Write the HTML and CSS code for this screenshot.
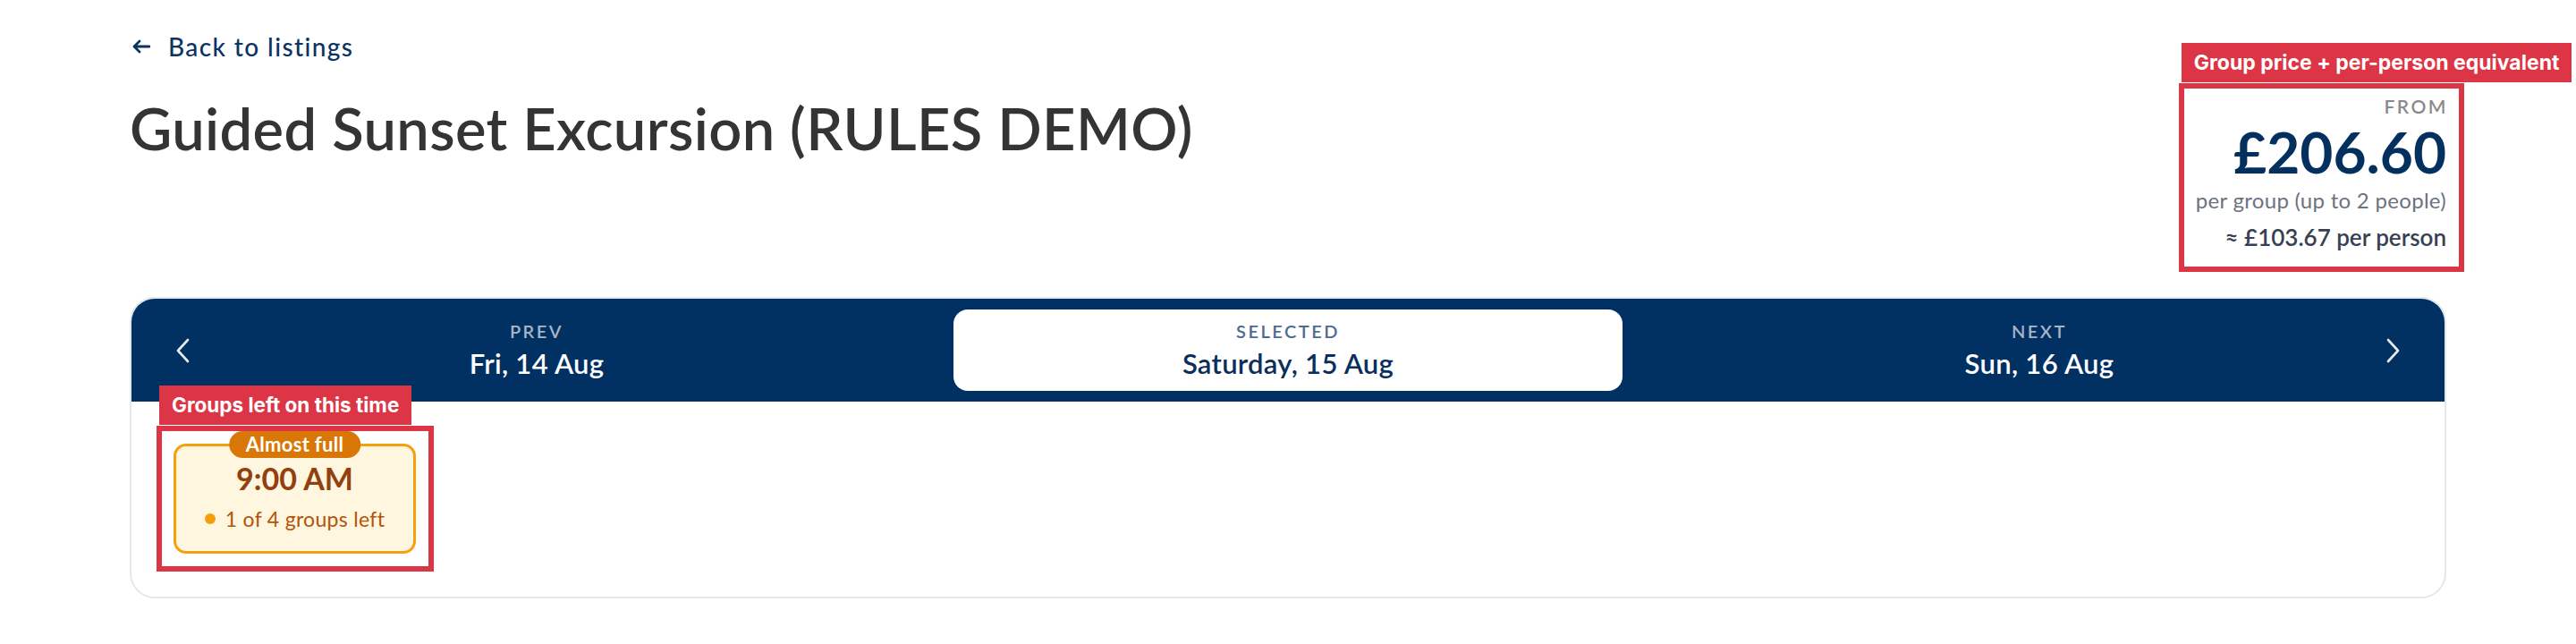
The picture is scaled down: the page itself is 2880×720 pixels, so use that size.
FILE: index.html
```html
<!DOCTYPE html>
<html lang="en">
<head>
<meta charset="utf-8">
<title>Guided Sunset Excursion (RULES DEMO)</title>
<link rel="stylesheet" href="styles.css">
</head>
<body>
<div class="page">
  <a class="back" href="#">
    <svg class="back-arrow" width="20" height="16" viewBox="0 0 20 16" aria-hidden="true"><path d="M19 8H2M8 2L2 8l6 6" fill="none" stroke="currentColor" stroke-width="2.8" stroke-linecap="round" stroke-linejoin="round"/></svg>
    <span>Back to listings</span>
  </a>

  <div class="header">
    <h1 class="title">Guided Sunset Excursion (RULES DEMO)</h1>
    <div class="price">
      <div class="annot-frame price-frame"></div>
      <span class="annot-label price-label">Group price + per-person equivalent</span>
      <div class="from">FROM</div>
      <div class="amount">£206.60</div>
      <div class="per-group">per group (up to 2 people)</div>
      <div class="per-person">≈ £103.67 per person</div>
    </div>
  </div>

  <div class="booking">
    <div class="datebar">
      <div class="day side prev">
        <button class="chev chev-left" aria-label="Previous day">
          <svg width="16" height="28" viewBox="0 0 16 28" aria-hidden="true"><path d="M14 2L3 14l11 12" fill="none" stroke="currentColor" stroke-width="2.6" stroke-linecap="round" stroke-linejoin="round"/></svg>
        </button>
        <div class="day-text">
          <div class="day-label">PREV</div>
          <div class="day-date">Fri, 14 Aug</div>
        </div>
      </div>
      <div class="day selected">
        <div class="day-text">
          <div class="day-label">SELECTED</div>
          <div class="day-date">Saturday, 15 Aug</div>
        </div>
      </div>
      <div class="day side next">
        <div class="day-text">
          <div class="day-label">NEXT</div>
          <div class="day-date">Sun, 16 Aug</div>
        </div>
        <button class="chev chev-right" aria-label="Next day">
          <svg width="16" height="28" viewBox="0 0 16 28" aria-hidden="true"><path d="M2 2l11 12L2 26" fill="none" stroke="currentColor" stroke-width="2.6" stroke-linecap="round" stroke-linejoin="round"/></svg>
        </button>
      </div>
    </div>

    <div class="slots">
      <div class="slot">
        <div class="annot-frame slot-frame"></div>
        <span class="annot-label slot-label">Groups left on this time</span>
        <span class="badge">Almost full</span>
        <div class="slot-time">9:00 AM</div>
        <div class="slot-left"><span class="dot"></span>1 of 4 groups left</div>
      </div>
    </div>
  </div>
</div>
</body>
</html>
```

FILE: styles.css
```css
* { box-sizing: border-box; }

html, body {
  margin: 0;
  padding: 0;
  background: #ffffff;
}

body {
  font-family: Lato, "Noto Sans", sans-serif;
  color: #333436;
}

.page {
  width: 2590px;
  margin: 0 auto;
  padding-top: 32px;
}

/* Back link */
.back {
  display: inline-flex;
  align-items: center;
  gap: 20px;
  height: 40px;
  color: #0b3462;
  text-decoration: none;
  font-size: 28px;
  line-height: 40px;
  font-weight: 500;
  letter-spacing: 1.4px;
  padding-left: 3px;
}
.back-arrow { display: block; }

/* Header */
.header {
  display: flex;
  justify-content: space-between;
  align-items: flex-start;
  margin-top: 33px;
}

.title {
  margin: 0;
  font-size: 65px;
  line-height: 77px;
  font-weight: 600;
  color: #333436;
  letter-spacing: 0.4px;
}

.price {
  position: relative;
  margin-top: 2px;
  text-align: right;
}

.from {
  font-size: 21px;
  line-height: 24px;
  letter-spacing: 2.5px;
  color: #8a8a8a;
  font-weight: 600;
  margin-right: -2px;
}
.amount {
  font-size: 64px;
  line-height: 64px;
  font-weight: 700;
  color: #04305f;
  margin-top: 7px;
}
.per-group {
  margin-top: 6px;
  font-size: 24px;
  line-height: 32px;
  letter-spacing: 0.3px;
  color: #6b7280;
}
.per-person {
  margin-top: 9px;
  font-size: 26px;
  line-height: 32px;
  font-weight: 600;
  color: #374151;
}

/* Annotation overlays */
.annot-frame {
  position: absolute;
  border: 6px solid #dc3545;
  pointer-events: none;
  z-index: 2;
}
.price-frame { top: -14px; right: -20px; bottom: -23px; left: -19px; }
.slot-frame { top: -23px; right: -23px; bottom: -23px; left: -22px; }

.annot-label {
  position: absolute;
  height: 44px;
  padding: 0 14px;
  background: #dc3545;
  color: #ffffff;
  font-family: Inter, "Liberation Sans", sans-serif;
  font-weight: 700;
  font-size: 23px;
  line-height: 44px;
  white-space: nowrap;
  text-align: left;
  z-index: 3;
}
.price-label { left: -16px; bottom: calc(100% + 15px); }
.slot-label { left: -19px; bottom: calc(100% + 24px); font-size: 22.5px; }

/* Booking card */
.booking {
  margin-top: 51px;
  border: 2px solid #e4e7ec;
  border-radius: 28px;
  overflow: hidden;
  background: #ffffff;
}

.datebar {
  display: grid;
  grid-template-columns: repeat(3, 1fr);
  padding: 12px 33px;
  background: #013162;
  color: #ffffff;
}

.day {
  height: 91px;
  display: grid;
  align-items: center;
}
.day.side { grid-template-columns: 1fr auto 1fr; }
.prev .day-text { grid-column: 2; }
.prev .chev { grid-column: 1; grid-row: 1; justify-self: start; margin-left: 16px; }
.next .day-text { grid-column: 2; }
.next .chev { grid-column: 3; grid-row: 1; justify-self: end; margin-right: 16px; }

.chev {
  border: 0;
  background: none;
  padding: 0;
  color: #e6e9ef;
  display: block;
  cursor: pointer;
}
.chev svg { display: block; }

.day-text { text-align: center; }
.day-label {
  font-size: 20px;
  line-height: 26px;
  letter-spacing: 2.5px;
  font-weight: 600;
  color: #a7b5c8;
}
.day-date {
  margin-top: 3px;
  font-size: 31px;
  line-height: 40px;
  font-weight: 600;
  letter-spacing: 0.3px;
  color: #ffffff;
}

.day.selected {
  margin: 0 46px;
  background: #ffffff;
  border-radius: 16px;
  justify-items: center;
}
.selected .day-label { color: #4d6b92; }
.selected .day-date { color: #0a2f5c; }

/* Slots */
.slots {
  padding: 47px 47px 48px;
  display: flex;
  gap: 24px;
}

.slot {
  position: relative;
  width: 271px;
  height: 123px;
  border: 3px solid #f5a00f;
  border-radius: 14px;
  background: #fef6de;
  text-align: center;
  padding-top: 16px;
}

.badge {
  position: absolute;
  top: -17px;
  left: 50%;
  transform: translateX(-50%);
  height: 30px;
  padding: 0 19px;
  border-radius: 15px;
  background: #d97706;
  color: #ffffff;
  font-size: 22px;
  line-height: 30px;
  font-weight: 700;
  letter-spacing: 0.3px;
  white-space: nowrap;
}

.slot-time {
  font-size: 34px;
  line-height: 40px;
  font-weight: 700;
  color: #92400e;
}

.slot-left {
  margin-top: 9px;
  display: flex;
  align-items: center;
  justify-content: center;
  gap: 11px;
  font-size: 23px;
  line-height: 32px;
  letter-spacing: 0.3px;
  color: #b45309;
}

.dot {
  width: 12px;
  height: 12px;
  border-radius: 50%;
  background: #f59e0b;
  display: inline-block;
}
```
